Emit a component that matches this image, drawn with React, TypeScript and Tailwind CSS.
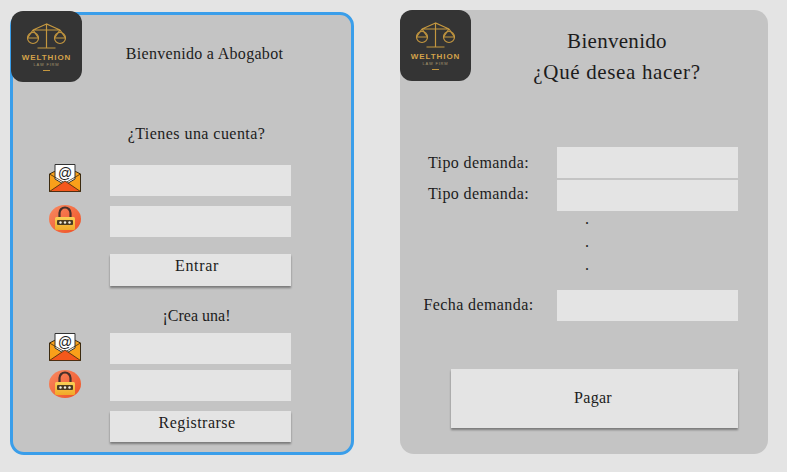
const serif = "font-['Liberation_Serif',serif] text-[#1c1c1c]";

function Logo({ className }: { className: string }) {
  return (
    <div className={`shrink-0 w-[71px] h-[71px] rounded-[12px] bg-[#343434] flex flex-col items-center ${className}`}>
      <svg width="48" height="35" viewBox="0 0 48 35" fill="none" stroke="#c4973f" strokeWidth="1.2" className="mt-[7px]">
        <path d="M23.500 6V30M14.500 30H32.500M23.500 6L10 12H37ZM10 12L4.500 20M10 12L15.500 20M37 12L31.500 20M37 12L42.500 20" />
        <circle cx="10" cy="20" r="5.500" />
        <circle cx="37" cy="20" r="5.500" />
        <path d="M4.500 20H15.500M31.500 20H42.500" />
      </svg>
      <span className="font-['Liberation_Sans',sans-serif] font-bold text-[8px] leading-[9px] tracking-[0.95px] text-[#d3a24a]">WELTHION</span>
      <span className="font-['Liberation_Sans',sans-serif] text-[4px] leading-[6px] tracking-[0.8px] text-[#a8986f]">LAW FIRM</span>
      <span className="w-[7px] h-px bg-[#c4973f] mt-[2px]" />
    </div>
  );
}

function MailIcon() {
  return (
    <svg width="32" height="28" viewBox="0 0 32 28" className="block">
      <path d="M.5 10L16 2L31.500 10V27.500H.5Z" fill="#f9a01a" stroke="#3b2a10" strokeWidth="1" />
      <path d="M6 .5H26V15L16 21L6 15Z" fill="#fff" stroke="#333" strokeWidth="1" />
      <text x="16" y="14" textAnchor="middle" fontSize="14" fontFamily="'Liberation Sans', sans-serif" fill="#222" stroke="none">@</text>
      <path d="M.5 10L16 19L31.500 10" fill="none" stroke="#3b2a10" strokeWidth="0.8" />
      <path d="M.5 27.500L16 17L31.500 27.500Z" fill="#f4581c" stroke="#3b2a10" strokeWidth="0.8" />
    </svg>
  );
}

function LockIcon() {
  return (
    <svg width="32" height="28" viewBox="0 0 32 28" className="block">
      <defs>
        <linearGradient id="lockBg" x1="0" y1="0" x2="1" y2="1">
          <stop offset="0" stopColor="#f98a62" />
          <stop offset="1" stopColor="#ee4f22" />
        </linearGradient>
        <linearGradient id="lockBody" x1="0" y1="0" x2="0" y2="1">
          <stop offset="0" stopColor="#f9cf56" />
          <stop offset="1" stopColor="#f1a827" />
        </linearGradient>
      </defs>
      <ellipse cx="16" cy="14" rx="16" ry="14" fill="url(#lockBg)" />
      <path d="M10.500 13V8A5.500 5.500 0 0 1 21.500 8V13" fill="none" stroke="#46302a" strokeWidth="2.200" />
      <rect x="6" y="12" width="20" height="13" rx="1.500" fill="url(#lockBody)" />
      <rect x="8" y="15" width="16" height="5" rx="1" fill="#4a3a22" />
      <circle cx="11.500" cy="17.500" r="1.200" fill="#f3f0e2" />
      <circle cx="16" cy="17.500" r="1.200" fill="#f3f0e2" />
      <circle cx="20.500" cy="17.500" r="1.200" fill="#f3f0e2" />
    </svg>
  );
}

function Field({ className = "" }: { className?: string }) {
  return <input className={`block bg-[#e4e4e4] outline-none ${className}`} />;
}

function IconRow({ icon, className = "", iconClass = "" }: { icon: React.ReactNode; className?: string; iconClass?: string }) {
  return (
    <div className={`flex items-start h-[31px] ${className}`}>
      <div className={`w-[32px] h-0 mr-[29px] ${iconClass}`}>{icon}</div>
      <Field className="w-[181px] h-[31px]" />
    </div>
  );
}

function Btn({ label, className }: { label: string; className: string }) {
  return (
    <button className={`block bg-[#e4e4e4] shadow-[0_2px_2px_rgba(0,0,0,0.38)] text-[16px] ${serif} ${className}`}>
      {label}
    </button>
  );
}

function FormRow({ label, className = "", labelClass = "" }: { label: string; className?: string; labelClass?: string }) {
  return (
    <div className={`flex items-center ${className}`}>
      <label className={`w-[157px] text-center text-[16px] tracking-[0.4px] ${serif} ${labelClass}`}>{label}</label>
      <Field className="w-[181px] h-[31px]" />
    </div>
  );
}

export default function App() {
  return (
    <div className="w-[787px] h-[472px] bg-[#e4e4e4] overflow-hidden flex items-start">
      <section className="relative ml-[10px] mt-[12px] w-[344px] h-[443px] box-border border-[3px] border-[#3a9eea] rounded-[14px] bg-[#c4c4c4] pl-[36px]">
        <Logo className="absolute left-[-2px] top-[-4px]" />
        <h1 className={`text-[16px] font-normal tracking-[0.3px] text-center pl-[9px] mt-[29px] leading-[20px] ${serif}`}>Bienvenido a Abogabot</h1>
        <p className={`w-[295px] text-center text-[16px] tracking-[0.45px] mt-[60px] leading-[20px] ${serif}`}>¿Tienes una cuenta?</p>
        <IconRow icon={<MailIcon />} className="mt-[21px]" iconClass="-mt-[1px]" />
        <IconRow icon={<LockIcon />} className="mt-[10px]" iconClass="-mt-[1px]" />
        <Btn label="Entrar" className="ml-[61px] mt-[17px] w-[181px] h-[32px] pb-[8px] pr-[7px] tracking-[0.7px]" />
        <p className={`w-[295px] text-center text-[16px] mt-[20px] leading-[20px] ${serif}`}>¡Crea una!</p>
        <IconRow icon={<MailIcon />} className="mt-[7px]" />
        <IconRow icon={<LockIcon />} className="mt-[6px]" />
        <Btn label="Registrarse" className="ml-[61px] mt-[10px] w-[181px] h-[31px] pb-[7px] pr-[7px] tracking-[0.45px]" />
      </section>

      <section className="relative ml-[46px] mt-[10px] w-[368px] h-[444px] rounded-[14px] bg-[#c4c4c4]">
        <Logo className="absolute left-0 top-0" />
        <div className={`pl-[66px] pt-[16px] text-center text-[21px] leading-[31px] ${serif}`}>
          <h2 className="font-normal tracking-[0.3px]">Bienvenido</h2>
          <p className="tracking-[0.65px]">¿Qué desea hacer?</p>
        </div>
        <div className="mt-[59px]">
          <FormRow label="Tipo demanda:" />
          <FormRow label="Tipo demanda:" className="mt-[2px]" labelClass="pb-[4px]" />
          <div className={`w-[374px] text-center text-[16px] leading-[23px] -mt-[4px] ${serif}`}>
            <p>.</p><p>.</p><p>.</p>
          </div>
          <FormRow label="Fecha demanda:" className="mt-[14px]" labelClass="pb-[2px] tracking-[0.3px]" />
          <Btn label="Pagar" className="ml-[51px] mt-[48px] w-[287px] h-[59px] pb-[1px] pr-[3px] tracking-[0.3px]" />
        </div>
      </section>
    </div>
  );
}
